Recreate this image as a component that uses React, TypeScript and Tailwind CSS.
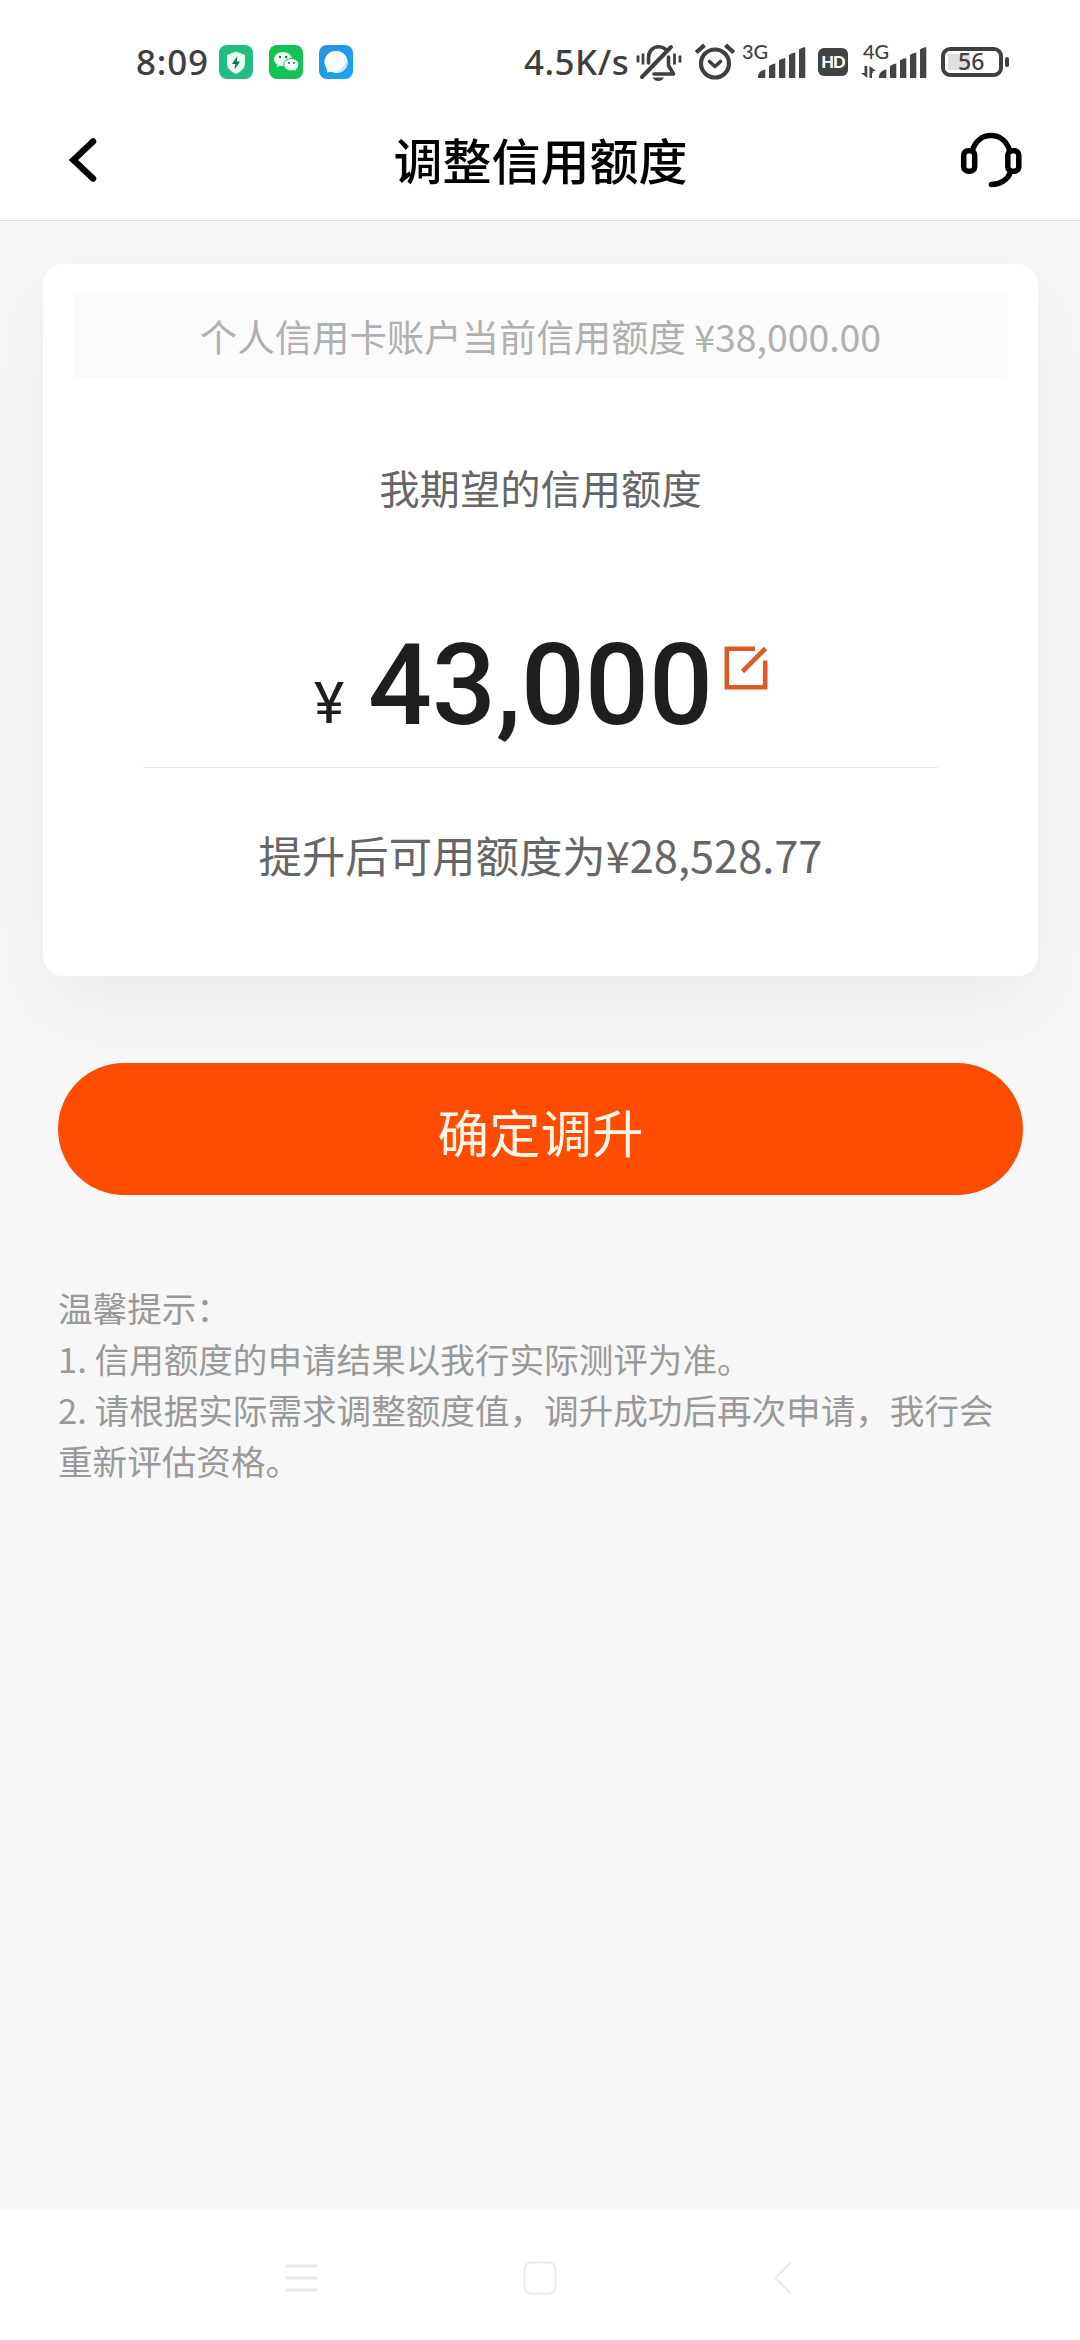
function Signal() {
  return (
    <svg className="h-[31px] w-[48px]" viewBox="0 0 48 31" fill="#444">
      <path d="M0 31v-2Q1 23.500 7.300 22.500V31zM11 31V19.500Q12.500 17.500 17.300 16.500V31zM21 31V13.500Q23 11.500 27.300 11V31zM31 31V8Q33 6 37.300 5.500V31zM41 31V2.500Q43 .5 47.300 0V31z" />
    </svg>
  );
}

function StatusBar() {
  return (
    <div className='flex h-[120px] items-start font-["Lato",sans-serif] text-[#3f3f3f]'>
      <div className="ml-[136px] mt-[44px] flex h-[35px] w-[83px] items-center whitespace-nowrap font-['Noto_Sans',sans-serif] text-[35px] font-medium leading-none tracking-[0.8px]">8:09</div>
      <svg className="mt-[45px] h-[34px] w-[34px]" viewBox="0 0 34 34">
        <rect width="34" height="34" rx="8" fill="#22bd83" />
        <path d="M17 6.500 26 10v8.500q0 6.500-9 10.500-9-4-9-10.500V10z" fill="#e9fff4" />
        <path d="M18.500 11 13 19h3.300L15.500 24.500 21 16.500h-3.300z" fill="#166a50" />
      </svg>
      <svg className="ml-[16px] mt-[45px] h-[34px] w-[34px]" viewBox="0 0 34 34">
        <rect width="34" height="34" rx="8" fill="#11c255" />
        <path d="M14 7c-5 0-9 3.200-9 7.200 0 2.300 1.300 4.300 3.400 5.600L7.600 22.500l3.200-1.700c1 .3 2 .4 3.200.4 5 0 9-3 9-7S19 7 14 7z" fill="#eafff0" />
        <path d="M22.300 13.500c-4.200 0-7.500 2.700-7.500 6.200s3.300 6.200 7.500 6.200c.9 0 1.800-.1 2.600-.4l2.700 1.400-.7-2.300c1.800-1.200 2.900-2.900 2.900-4.900 0-3.500-3.300-6.200-7.500-6.200z" fill="#f4fff7" stroke="#11c255" strokeWidth="1" />
        <g fill="#2c6a4c"><circle cx="11" cy="12" r="1.200" /><circle cx="17.200" cy="12" r="1.200" /><circle cx="20" cy="18" r="1" /><circle cx="25" cy="18" r="1" /></g>
      </svg>
      <svg className="ml-[16px] mt-[45px] h-[34px] w-[34px]" viewBox="0 0 34 34">
        <defs>
          <linearGradient id="browser" x1="0" y1="0" x2="1" y2="1"><stop stopColor="#2f8fe0" /><stop offset="1" stopColor="#12a8f4" /></linearGradient>
        </defs>
        <rect width="34" height="34" rx="8" fill="url(#browser)" />
        <path d="M17.500 6a11 11 0 1 1-4.500 21c-1.500-.7-3 .8-5 .4.600-1.500-.3-3.200-1-5A11 11 0 0 1 17.500 6z" fill="#f5fdff" />
        <path d="M28.500 15A11 11 0 0 1 17 28q7-4 11.500-13z" fill="#c9e3f6" />
      </svg>
      <div className="ml-[171px] mt-[44px] flex h-[35px] w-[112px] items-center whitespace-nowrap font-['Noto_Sans',sans-serif] text-[35px] font-medium leading-none tracking-[0.5px]">4.5K/s</div>
      <svg className="mt-[43px] h-[39px] w-[46px]" viewBox="0 0 46 39" fill="none" stroke="#3f3f3f" strokeWidth="3.600" strokeLinecap="round">
        <path d="M6 34 35 4" strokeWidth="4" />
        <path d="M12.500 20v-5C12.500 8 17 3.800 22.500 3.800c3 0 5.500 1 7.500 3" />
        <path d="M32.500 14v8.500l5 8.500H18" strokeLinejoin="round" />
        <path d="M2 12.500v7M7 10.500v11M38.500 10.500v11M44 12.500v7" strokeWidth="2.800" strokeLinecap="butt" />
        <path d="M16.500 34.500h11.500q-2 3.500-5.700 3.500t-5.800-3.500z" fill="#3f3f3f" stroke="none" />
      </svg>
      <svg className="ml-[13px] mt-[43px] h-[37px] w-[40px]" viewBox="0 0 40 37" fill="none" stroke="#3f3f3f" strokeWidth="4.200">
        <circle cx="20" cy="20.500" r="14" />
        <path d="m14.500 18.500 5.500 5 5.500-5" strokeLinecap="round" strokeLinejoin="round" strokeWidth="3.600" />
        <path d="M1.200 9.500 9.500 2.200M38.800 9.500 30.500 2.200" />
      </svg>
      <div className="relative ml-[23px] mt-[47px] h-[31px] w-[48px]">
        <Signal />
        <span className="absolute -left-[16px] -top-[6px] text-[20px] font-medium leading-[20px]">3G</span>
      </div>
      <div className="ml-[12px] mt-[48px] flex h-[28px] w-[30px] items-center justify-center rounded-[6px] bg-[#424242] text-[16.500px] font-black leading-none tracking-[-0.8px] text-white">HD</div>
      <div className="relative ml-[31px] mt-[47px] h-[31px] w-[48px]">
        <Signal />
        <span className="absolute -left-[16px] -top-[6px] text-[20px] font-medium leading-[20px]">4G</span>
        <svg className="absolute -left-[18px] top-[19px] h-[12px] w-[15px]" viewBox="0 0 15 12" fill="#444">
          <path d="M3.500 0h2.800v12L0 7h3.500zM8.500 0 15 5h-3.200v2H11v5H8.500z" />
        </svg>
      </div>
      <div className="ml-[14px] mt-[47px] flex h-[30px] w-[62px] rounded-[9px] border-[4.500px] border-[#404040] p-[3px]">
        <div className="h-full w-[22px] bg-[#e0e0e0]" />
        <div className="-ml-[12px] -mt-[2px] font-['Noto_Sans',sans-serif] text-[23px] font-medium leading-[19px]">56</div>
      </div>
      <div className="ml-[2px] mt-[57px] h-[10px] w-[4px] rounded-[2px] bg-[#404040]" />
    </div>
  );
}

function Header() {
  return (
    <header className="flex h-[101px] items-start justify-between border-b border-[#dedede] pl-[68px] pr-[58px]">
      <svg className="mt-[16px] h-[48px] w-[53px]" viewBox="0 0 53 48" fill="none" stroke="#000" strokeWidth="6.500" strokeLinecap="round">
        <path d="M25 5.500 5.500 24 25 42.500" />
      </svg>
      <h1 className="mt-[14px] text-[49px] font-medium leading-[50px] text-black">调整信用额度</h1>
      <svg className="mt-[11px] h-[58px] w-[62px]" viewBox="0 0 62 58" fill="none" stroke="#000" strokeWidth="5.500" strokeLinecap="round">
        <rect x="3.700" y="19.700" width="11" height="20.500" rx="4.500" />
        <rect x="47.800" y="19.700" width="11" height="20.500" rx="4.500" />
        <path d="M12.500 19C15.500 10 22.500 4.500 31 4.500S46.500 10 49.500 19M50.500 41c-2.500 7.500-10 12.500-19 12.500" />
      </svg>
    </header>
  );
}

function LimitCard() {
  return (
    <section className="h-[712px] rounded-[20px] bg-white pt-[29px] shadow-[0_30px_70px_rgba(0,0,0,0.055)]">
      <div className="mx-[31px] flex h-[85px] items-center justify-center bg-[#fbfbfb] pt-[2px] text-[37.400px] font-normal leading-none text-[#b0b0b0]">
        个人信用卡账户当前信用额度 ¥38,000.00
      </div>
      <div className="mt-[86px] text-center text-[40.300px] font-normal leading-[46px] text-[#666]">我期望的信用额度</div>
      <div className="mx-[100px] mt-[110px] flex h-[148px] border-b border-[#e9ece9] pl-[171px] font-['Roboto',sans-serif] text-[#1e1e1e]">
        <span className="mt-[55px] w-[54px] text-[57.500px] leading-[58px]">¥</span>
        <span className="mt-[9px] w-[356px] whitespace-nowrap text-[112.500px] font-medium leading-[113px]">43,000</span>
        <svg className="mt-[26px] h-[44px] w-[44px]" viewBox="0 0 44 44" fill="none" stroke="#dc5a28" strokeWidth="4.600">
          <path d="M31 2.800H2.800v38.400h38.400V14.500" />
          <path d="m18.500 25.500 23-23" />
        </svg>
      </div>
      <div className="mt-[61px] text-center text-[43.400px] font-normal leading-[50px] text-[#666]">提升后可用额度为¥28,528.77</div>
    </section>
  );
}

function NavBar() {
  return (
    <nav className="flex h-[130px] items-start bg-white pl-[286px] pt-[51px]">
      <svg className="h-[34px] w-[31px]" viewBox="0 0 31 34" stroke="#e9e9e9" strokeWidth="3"><path d="M0 5h31M0 17h31M0 29h31" /></svg>
      <svg className="ml-[206px] h-[34px] w-[34px]" viewBox="0 0 34 34" fill="none" stroke="#ebebeb" strokeWidth="2"><rect x="1.500" y="1.500" width="31" height="31" rx="7" /></svg>
      <svg className="ml-[217px] h-[34px] w-[18px]" viewBox="0 0 18 34" fill="none" stroke="#e9e9e9" strokeWidth="2"><path d="M17 1 1.500 17 17 33" /></svg>
    </nav>
  );
}

export default function App() {
  return (
    <div className='flex h-[2340px] w-[1080px] flex-col overflow-hidden bg-white font-["Noto_Sans_CJK_SC",sans-serif]'>
      <StatusBar />
      <Header />
      <main className="flex-1 overflow-hidden bg-[#f7f7f7] pt-[43px]">
        <div className="ml-[43px] mr-[42px]"><LimitCard /></div>
        <button className="relative mx-[58px] mt-[87px] block h-[132px] w-[965px] rounded-full bg-[#ff4c00] pt-[3px] text-[51.500px] font-normal leading-none text-[#fff6e8]">确定调升</button>
        <div className="mx-[58px] mt-[87px] text-[34.600px] font-normal leading-[51px] text-[#999]">
          <p>温馨提示：</p>
          <p>1. 信用额度的申请结果以我行实际测评为准。</p>
          <p>2. 请根据实际需求调整额度值，调升成功后再次申请，我行会重新评估资格。</p>
        </div>
      </main>
      <NavBar />
    </div>
  );
}
